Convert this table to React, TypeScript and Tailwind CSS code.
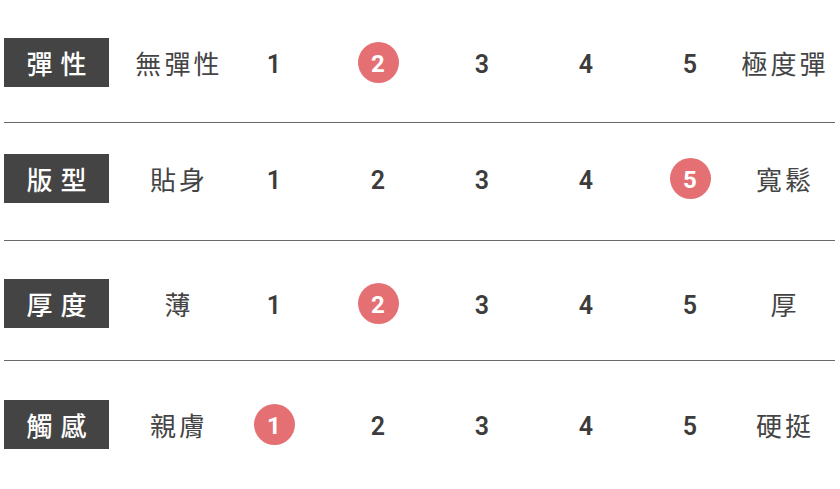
import React from 'react'

const FONT = { fontFamily: '"Noto Sans CJK TC", "Noto Sans", sans-serif' }
const NUM = { fontFamily: 'Roboto, "Noto Sans", sans-serif' }

type Row = { label: string; low: string; high: string; value: number; pt: string; pb: string }

const rows: Row[] = [
  { label: '彈性', low: '無彈性', high: '極度彈', value: 2, pt: 'pt-[38px]', pb: 'pb-[35px]' },
  { label: '版型', low: '貼身', high: '寬鬆', value: 5, pt: 'pt-[31px]', pb: 'pb-[37px]' },
  { label: '厚度', low: '薄', high: '厚', value: 2, pt: 'pt-[38px]', pb: 'pb-[32px]' },
  { label: '觸感', low: '親膚', high: '硬挺', value: 1, pt: 'pt-[39px]', pb: 'pb-[40px]' },
]

function Scale({ value }: { value: number }) {
  return (
    <>
      {[1, 2, 3, 4, 5].map((n) => (
        <div key={n} className="flex w-[104px] items-center justify-center">
          {n === value ? (
            <span
              className="flex h-[41px] w-[41px] items-center justify-center rounded-full bg-[#e57074] pt-[2px] text-[24px] leading-none font-bold text-white"
              style={NUM}
            >
              {n}
            </span>
          ) : (
            <span className="pt-[3px] text-[25px] leading-none font-semibold text-[#3c3c3c]" style={NUM}>
              {n}
            </span>
          )}
        </div>
      ))}
    </>
  )
}

export default function App() {
  return (
    <div className="h-[489px] w-[840px] overflow-hidden bg-white pl-[4px]" style={FONT}>
      <div className="w-[831px]">
        {rows.map((r, i) => (
          <div key={r.label}>
            <div className={`flex items-center ${r.pt} ${r.pb}`}>
              <div className="flex h-[49px] w-[105px] shrink-0 items-center justify-center bg-[#444444] text-[26px] font-medium tracking-[0.3em] whitespace-nowrap text-white">
                <span className="pl-[0.3em]">{r.label}</span>
              </div>
              <div className="ml-[27px] flex w-[86px] shrink-0 justify-center text-[26px] tracking-[0.12em] whitespace-nowrap text-[#444444]">
                {r.low}
              </div>
              <Scale value={r.value} />
              <div className="flex w-[86px] shrink-0 justify-center text-[26px] tracking-[0.12em] whitespace-nowrap text-[#444444]">
                {r.high}
              </div>
            </div>
            {i < rows.length - 1 && <div className="h-px bg-[#6a6a6a]" />}
          </div>
        ))}
      </div>
    </div>
  )
}
